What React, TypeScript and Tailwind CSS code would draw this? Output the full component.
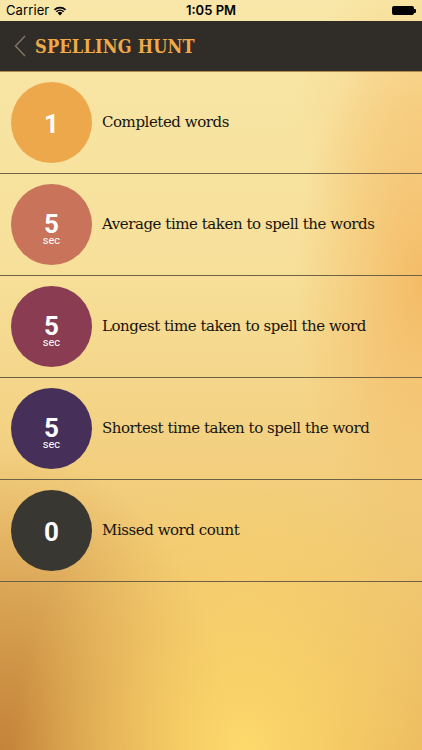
import React from "react";

const rows = [
  { n: "1", sec: false, color: "bg-[#eda84c]", label: "Completed words" },
  { n: "5", sec: true, color: "bg-[#c8735a]", label: "Average time taken to spell the words" },
  { n: "5", sec: true, color: "bg-[#893c52]", label: "Longest time taken to spell the word" },
  { n: "5", sec: true, color: "bg-[#46305a]", label: "Shortest time taken to spell the word" },
  { n: "0", sec: false, color: "bg-[#383731]", label: "Missed word count" },
];

export default function App() {
  return (
    <div className="relative w-[422px] h-[750px] overflow-hidden bg-[radial-gradient(ellipse_55%_38%_at_58%_100%,#fdd96b_0%,rgba(253,217,107,0)_100%),radial-gradient(ellipse_55%_40%_at_0%_100%,#c4843a_0%,rgba(196,132,58,0)_100%),radial-gradient(ellipse_30%_35%_at_100%_38%,#f4bb66_0%,rgba(244,187,102,0)_100%),radial-gradient(ellipse_30%_20%_at_100%_15%,#f8d58c_0%,rgba(248,213,140,0)_100%),linear-gradient(180deg,#f8e7a8_0%,#f7e09a_35%,#f1ca77_70%,#e8b55d_100%)] font-['Roboto',sans-serif]">
      {/* status bar */}
      <div className="h-[21px] flex items-center justify-between px-[6px] text-[13px] text-black">
        <div className="flex items-center gap-[4px] w-[100px]">
          <span className="font-['Inter',sans-serif] tracking-[0.1px]">Carrier</span>
          <svg width="14" height="10" viewBox="0 0 14 10">
            <path d="M7 9.5 L4.6 6.9 A3.4 3.4 0 0 1 9.4 6.9 Z" fill="black" />
            <path d="M2.8 5.2 A6 6 0 0 1 11.2 5.2 L10.1 6.3 A4.5 4.5 0 0 0 3.9 6.3 Z" fill="black" />
            <path d="M0.9 3.3 A8.7 8.7 0 0 1 13.1 3.3 L12 4.4 A7.2 7.2 0 0 0 2 4.4 Z" fill="black" />
          </svg>
        </div>
        <span className="font-['Inter',sans-serif] font-semibold text-[13px]">1:05 PM</span>
        <div className="w-[100px] flex justify-end items-center">
          <div className="w-[22px] h-[9px] bg-black rounded-[2px]" />
          <div className="w-[2px] h-[4px] bg-black rounded-r-[1px]" />
        </div>
      </div>
      {/* nav bar */}
      <div className="h-[51px] bg-[#302d29] flex items-center border-b border-[#b08a4c]">
        <svg width="12" height="22" viewBox="0 0 12 22" className="ml-[14px] mr-[9px]">
          <path d="M11 1 L1.5 11 L11 21" fill="none" stroke="#7d7462" strokeWidth="1.5" />
        </svg>
        <span className="text-[#f0ab48] font-['DejaVu_Serif_Condensed','DejaVu_Serif',serif] font-stretch-condensed font-bold text-[18px] tracking-[0.2px] mt-[1px]">
          SPELLING HUNT
        </span>
      </div>
      {/* rows */}
      <div className="flex flex-col">
        {rows.map((r, i) => (
          <div
            key={i}
            className="h-[102px] flex items-center border-b border-[#6f6146]"
          >
            <div
              className={`ml-[11px] w-[81px] h-[81px] rounded-full ${r.color} flex flex-col items-center justify-center text-white ${r.sec ? "pt-[10px]" : "pt-[3px]"}`}
            >
              <span className={`font-['Roboto',sans-serif] font-bold text-[26px] ${r.sec ? "leading-[22px]" : "leading-[26px]"}`}>
                {r.n}
              </span>
              {r.sec && (
                <span className="font-['Roboto',sans-serif] text-[11px] leading-[11px]">sec</span>
              )}
            </div>
            <span className="ml-[10px] text-[15px] text-[#161410] font-['DejaVu_Serif',serif] tracking-[-0.45px]">
              {r.label}
            </span>
          </div>
        ))}
      </div>
    </div>
  );
}
